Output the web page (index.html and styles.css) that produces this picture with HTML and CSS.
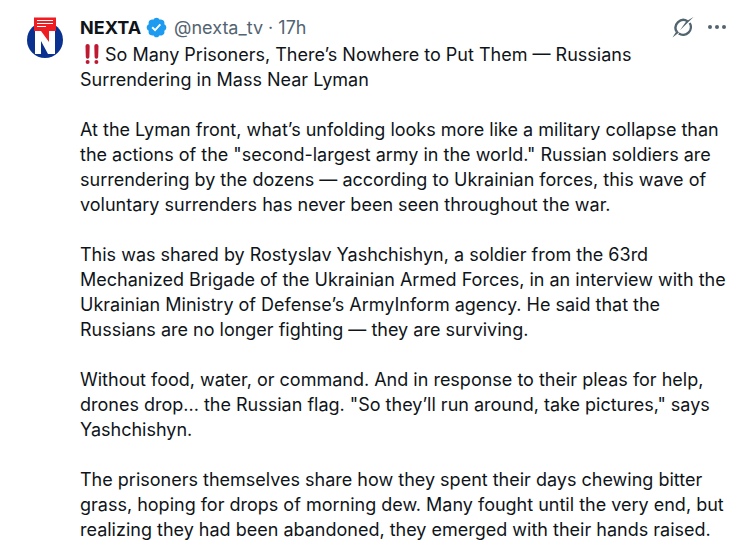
FILE: index.html
```html
<!DOCTYPE html>
<html lang="en">
<head>
<meta charset="utf-8">
<meta name="viewport" content="width=device-width, initial-scale=1">
<title>NEXTA post</title>
<link rel="stylesheet" href="styles.css">
</head>
<body>
<article class="post">
  <a class="avatar" href="#" aria-label="NEXTA profile">
    <svg viewBox="0 0 40 44" width="40" height="44" aria-hidden="true">
      <circle cx="20" cy="25" r="18" fill="#0b3190"/>
      <path d="M10 15h20v24h-7l-7-13v13h-6z" fill="#fff"/>
      <path d="M9 2.500h22V16h-7v11L16 16H9z" fill="#ee1c23"/>
      <path d="M12 5.500h16M12 8.500h16M12 11.500h9" stroke="#fff" stroke-width="1.200"/>
    </svg>
  </a>
  <div class="content">
    <header class="head">
      <a class="name" href="#">NEXTA</a>
      <svg class="badge" viewBox="0 0 22 22" width="23" height="23" role="img" aria-label="Verified account"><path fill="#1d9bf0" d="M20.396 11c-.018-.646-.215-1.275-.57-1.816-.354-.54-.852-.972-1.438-1.246.223-.607.27-1.264.14-1.897-.131-.634-.437-1.218-.882-1.687-.47-.445-1.053-.75-1.687-.882-.633-.13-1.29-.083-1.897.14-.273-.587-.704-1.086-1.245-1.44S11.647 1.62 11 1.604c-.646.017-1.273.213-1.813.568s-.969.854-1.24 1.44c-.608-.223-1.267-.272-1.902-.14-.635.13-1.22.436-1.69.882-.445.47-.749 1.055-.878 1.688-.13.633-.08 1.29.144 1.896-.587.274-1.087.705-1.443 1.245-.356.54-.555 1.17-.574 1.817.02.647.218 1.276.574 1.817.356.54.856.972 1.443 1.245-.224.606-.274 1.263-.144 1.896.13.634.433 1.218.877 1.688.47.443 1.054.747 1.687.878.633.132 1.29.084 1.897-.136.274.586.705 1.084 1.246 1.439.54.354 1.17.551 1.816.569.647-.016 1.276-.213 1.817-.567s.972-.854 1.245-1.44c.604.239 1.266.296 1.903.164.636-.132 1.22-.447 1.68-.907.46-.46.776-1.044.908-1.681s.075-1.299-.165-1.903c.586-.274 1.084-.705 1.439-1.246.354-.54.551-1.17.569-1.816zM9.662 14.85l-3.429-3.428 1.293-1.302 2.072 2.072 4.4-4.794 1.347 1.246z"/></svg>
      <span class="meta"><a href="#">@nexta_tv</a> · <a href="#">17h</a></span>
      <div class="actions">
        <button type="button" aria-label="Explain this post">
          <svg viewBox="0 0 22 22" width="22" height="22" fill="none" stroke="#536471" stroke-width="2.400" aria-hidden="true"><path d="M15.500 4.200A7.800 7.800 0 0 0 4.500 14.500M6.800 16.600A7.800 7.800 0 0 0 17.700 6"/><path d="M21.500 0 8 13.200l6.300-9zM.5 20.500 5 13.200l2 2.300z" fill="#536471" stroke="none"/></svg>
        </button>
        <button type="button" aria-label="More">
          <svg viewBox="0 0 22 22" width="22" height="22" fill="#536471" aria-hidden="true"><circle cx="4" cy="10" r="2"/><circle cx="11" cy="10" r="2"/><circle cx="18" cy="10" r="2"/></svg>
        </button>
      </div>
    </header>
    <div class="text">
      <p><svg class="emoji" viewBox="0 0 25 24" width="25" height="24" role="img" aria-label="Double exclamation mark"><path d="M5.500 4a2 2 0 0 1 4.200 0L9.400 15a1.800 1.800 0 0 1-3.600 0zM14.300 4a2 2 0 0 1 4.200 0l-.3 11a1.800 1.800 0 0 1-3.600 0z" fill="#be1931"/><circle cx="7.600" cy="20" r="2" fill="#be1931"/><circle cx="16.400" cy="20" r="2" fill="#be1931"/></svg>So Many Prisoners, There’s Nowhere to Put Them — Russians<br>Surrendering in Mass Near Lyman</p>
      <p>At the Lyman front, what’s unfolding looks more like a military collapse than<br>the actions of the "second-largest army in the world." Russian soldiers are<br>surrendering by the dozens — according to Ukrainian forces, this wave of<br>voluntary surrenders has never been seen throughout the war.</p>
      <p>This was shared by Rostyslav Yashchishyn, a soldier from the 63rd<br>Mechanized Brigade of the Ukrainian Armed Forces, in an interview with the<br>Ukrainian Ministry of Defense’s ArmyInform agency. He said that the<br>Russians are no longer fighting — they are surviving.</p>
      <p>Without food, water, or command. And in response to their pleas for help,<br>drones drop... the Russian flag. "So they’ll run around, take pictures," says<br>Yashchishyn.</p>
      <p>The prisoners themselves share how they spent their days chewing bitter<br>grass, hoping for drops of morning dew. Many fought until the very end, but<br>realizing they had been abandoned, they emerged with their hands raised.</p>
    </div>
  </div>
</article>
</body>
</html>
```
FILE: styles.css
```css
* { box-sizing: border-box; }
body {
  margin: 0;
  background: #fff;
  color: #0f1419;
  font: 18px/25px Inter, "Liberation Sans", sans-serif;
}
a { color: inherit; text-decoration: none; }
.post {
  display: flex;
  gap: 15px;
  padding: 15px 16px 5px 25px;
}
.avatar { flex: none; }
.avatar svg, .head svg { display: block; }
.content { flex: 1; min-width: 0; }
.head { display: flex; align-items: center; height: 25px; }
.name { font-weight: 700; }
.badge { margin: 0 6px 0 4px; }
.meta { color: #536471; }
.actions { display: flex; gap: 12px; margin-left: auto; }
.actions button {
  padding: 0;
  border: 0;
  background: none;
  cursor: pointer;
}
.text { padding-top: 2px; white-space: nowrap; }
.text p { margin: 0 0 25px; }
.text p:last-child { margin-bottom: 0; }
.emoji { display: inline-block; height: 24px; vertical-align: -5px; }
```
